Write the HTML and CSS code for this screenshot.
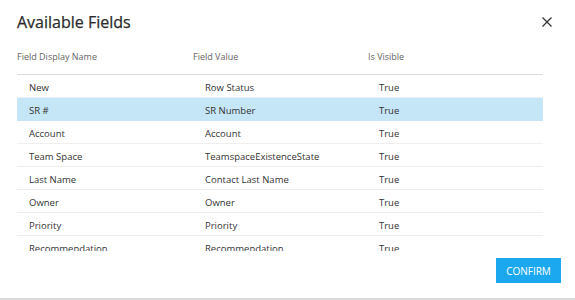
FILE: index.html
```html
<!DOCTYPE html>
<html>
<head>
<meta charset="utf-8">
<link rel="stylesheet" href="styles.css">
</head>
<body>
<div class="dialog">
  <div class="title-bar">
    <h1 class="title">Available Fields</h1>
    <button class="close" aria-label="Close">
      <svg width="10" height="10" viewBox="0 0 10 10"><path d="M0.5 0.5 L9.5 9.5 M9.5 0.5 L0.5 9.5" stroke="#333" stroke-width="1.3" fill="none"/></svg>
    </button>
  </div>
  <div class="scroll">
    <div class="grid">
      <div class="row head">
        <div class="cell">Field Display Name</div>
        <div class="cell">Field Value</div>
        <div class="cell">Is Visible</div>
      </div>
      <div class="row"><div class="cell">New</div><div class="cell">Row Status</div><div class="cell">True</div></div>
      <div class="row selected"><div class="cell">SR #</div><div class="cell">SR Number</div><div class="cell">True</div></div>
      <div class="row"><div class="cell">Account</div><div class="cell">Account</div><div class="cell">True</div></div>
      <div class="row"><div class="cell">Team Space</div><div class="cell">TeamspaceExistenceState</div><div class="cell">True</div></div>
      <div class="row"><div class="cell">Last Name</div><div class="cell">Contact Last Name</div><div class="cell">True</div></div>
      <div class="row"><div class="cell">Owner</div><div class="cell">Owner</div><div class="cell">True</div></div>
      <div class="row"><div class="cell">Priority</div><div class="cell">Priority</div><div class="cell">True</div></div>
      <div class="row"><div class="cell">Recommendation</div><div class="cell">Recommendation</div><div class="cell">True</div></div>
    </div>
  </div>
  <div class="footer">
    <button class="confirm">CONFIRM</button>
  </div>
</div>
</body>
</html>
```
FILE: styles.css
```css
html, body {
  margin: 0;
  padding: 0;
  background: #fff;
}
body {
  font-family: "Open Sans", "Noto Sans", sans-serif;
  color: #333;
}
.dialog {
  width: 575px;
  height: 300px;
  box-sizing: border-box;
  border-bottom: 2px solid #d8d8d8;
  display: flex;
  flex-direction: column;
}
.title-bar {
  display: flex;
  justify-content: space-between;
  align-items: center;
  height: 40px;
  padding: 4px 23px 0 17px;
  box-sizing: border-box;
}
.title {
  margin: 0;
  font-size: 16px;
  font-weight: 400;
  color: #2b2b2b;
  line-height: 20px;
  -webkit-text-stroke: 0.25px #2b2b2b;
}
.close {
  border: 0;
  background: none;
  padding: 0;
  width: 10px;
  height: 10px;
  display: flex;
  cursor: pointer;
}
.scroll {
  height: 211px;
  overflow: hidden;
  padding: 0 32px 0 17px;
}
.grid {
  display: flex;
  flex-direction: column;
}
.row {
  display: grid;
  grid-template-columns: 176px 175px 1fr;
  height: 23px;
  box-sizing: border-box;
  border-bottom: 1px solid #efefef;
  align-items: center;
  font-size: 9.5px;
  color: #333;
}
.row .cell {
  padding-left: 12px;
  padding-top: 3px;
}
.row .cell:last-child {
  padding-left: 11px;
}
.row.head {
  height: 35px;
  border-bottom: 1px solid #dcdcdc;
  font-size: 9px;
  color: #666;
  align-items: start;
}
.row.head .cell {
  padding: 10px 0 0 0;
}
.row.selected {
  background: #c5e6f7;
  border-bottom-color: #c5e6f7;
}
.footer {
  display: flex;
  justify-content: flex-end;
  padding: 7px 14px 0 0;
}
.confirm {
  width: 65px;
  height: 25px;
  border: 0;
  background: #1ba8ee;
  color: #fff;
  font-family: "Open Sans", "Noto Sans", sans-serif;
  font-size: 10px;
  padding: 0;
}
```
